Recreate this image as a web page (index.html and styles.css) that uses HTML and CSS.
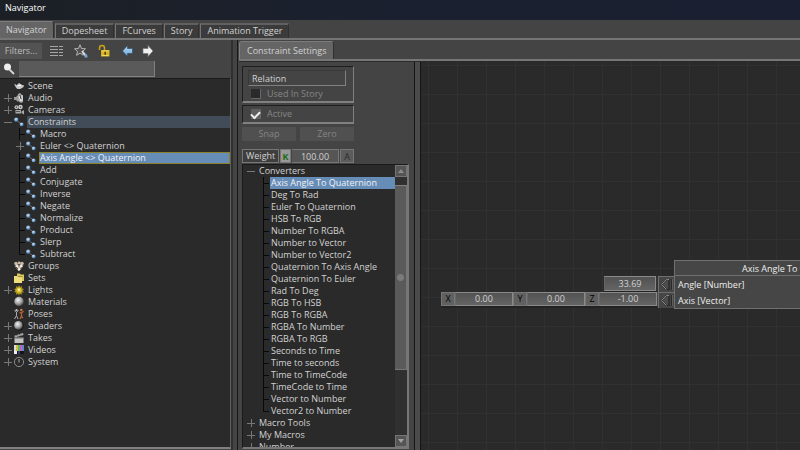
FILE: index.html
```html
<!DOCTYPE html>
<html lang="en">
<head>
<meta charset="utf-8">
<title>Navigator</title>
<link rel="stylesheet" href="styles.css">
</head>
<body>
<svg class="defs" aria-hidden="true">
  <defs>
    <radialGradient id="gBlue" cx=".4" cy=".35" r=".7"><stop offset="0" stop-color="#cfe6fa"/><stop offset=".6" stop-color="#6f9cc8"/><stop offset="1" stop-color="#2f4c6c"/></radialGradient>
    <radialGradient id="gGray" cx=".4" cy=".35" r=".7"><stop offset="0" stop-color="#f4f4f4"/><stop offset=".6" stop-color="#9a9a9a"/><stop offset="1" stop-color="#3c3c3c"/></radialGradient>
    <linearGradient id="gArrow" x1="0" y1="0" x2="0" y2="1"><stop offset="0" stop-color="#b9dcf8"/><stop offset="1" stop-color="#6ea5d6"/></linearGradient>
  </defs>
  <symbol id="link" viewBox="0 0 10 12"><path d="M2 4l6 4.500" stroke="#6b6b6b" fill="none"/><circle cx="2.300" cy="3.700" r="2.200" fill="url(#gBlue)"/><circle cx="7.700" cy="8.400" r="2" fill="url(#gBlue)"/></symbol>
  <symbol id="scene" viewBox="0 0 10 12"><path d="M.2 4.500C1.500 4 2 5 2.500 5.500c.2-1 1-1.500 2-1.600V3h1.200v.8c1 .1 2 .6 2.300 1.400C9 4.500 10 5 9.800 6.300 9.500 7.500 8.500 7.800 7.800 8c-.6 1.300-4.200 1.500-5.200.2C1.500 7.500 1.400 5.500.2 4.500z" fill="#c9c9c9"/><path d="M3.500 5.500h3.500" stroke="#fff"/></symbol>
  <symbol id="audio" viewBox="0 0 10 12"><path d="M0 5h2l2-2v7L2 8H0z" fill="#999"/><path d="M4 2l2-1 3 3v6l-2 1-3-2z" fill="#aaa"/><path d="M5 4l2 5M8 3v6" stroke="#eee" fill="none"/><path d="M6 3l1 4" stroke="#444"/></symbol>
  <symbol id="camera" viewBox="0 0 10 12"><circle cx="2.500" cy="3.300" r="2" fill="#bbb"/><circle cx="6.500" cy="3" r="2.200" fill="#ccc"/><circle cx="2.500" cy="3.300" r=".7" fill="#444"/><circle cx="6.500" cy="3" r=".8" fill="#444"/><path d="M1.500 6h5.500v3.500H1.500zM7.500 7.500L10 6v4.500L7.500 9z" fill="#a9a9a9"/><path d="M2 7.500h4" stroke="#555"/></symbol>
  <symbol id="groups" viewBox="0 0 10 12"><g fill="#c8b8a4"><circle cx="2" cy="3.500" r="1.800"/><circle cx="5.200" cy="3" r="1.400"/><circle cx="8" cy="3.500" r="1.800"/><path d="M.5 5.500h9L5.500 11h-1z"/></g><g fill="#f3eadf"><circle cx="3.300" cy="6" r="1.400"/><circle cx="7" cy="6" r="1.400"/><circle cx="5" cy="9" r="1.300"/></g><path d="M5 4.500v2M2 7l2 2M8.500 7l-2 2" stroke="#5e4938" fill="none"/></symbol>
  <symbol id="sets" viewBox="0 0 10 12"><path d="M3 1.500h3l.7 1H10V9H3z" fill="#d8c65e"/><path d="M0 4h3l.8 1H8v6H0z" fill="#f0dc7c"/><path d="M3.800 4.600H8.500" stroke="#9b8b35"/></symbol>
  <symbol id="light" viewBox="0 0 10 12"><path d="M5 1l1 2 2.200-1-.5 2.300 2.300.7-1.500 1.500L10 8.300l-2.300.2.300 2.200-2.100-1L5 11.500 4 9.700l-2 1 .2-2.200L0 8l1.400-1.500L0 5l2.300-.7L1.800 2 4 3z" fill="#a8921d"/><circle cx="5" cy="6.200" r="2.600" fill="#d9be2d"/><circle cx="5" cy="5.800" r="1.200" fill="#fff7ae"/></symbol>
  <symbol id="ball" viewBox="0 0 10 12"><circle cx="5" cy="5.500" r="4.700" fill="url(#gGray)"/></symbol>
  <symbol id="shader" viewBox="0 0 10 12"><circle cx="5" cy="5.800" r="4.800" fill="#171717"/><circle cx="4.400" cy="5.400" r="4.300" fill="url(#gGray)"/></symbol>
  <symbol id="poses" viewBox="0 0 10 12"><path d="M.5 2l2 2.500L4.500 2M2.500 4v3.500L.5 11M2.500 7.500L4 11" stroke="#aaa" fill="none"/><circle cx="2.500" cy="2" r="1" fill="#ccc"/><path d="M9.500 3L7.500 5l-2-.5M7.500 5v3L6 11M7 8l2 2" stroke="#b75f35" fill="none" stroke-width="1.300"/><circle cx="7.300" cy="2" r="1.200" fill="#d17c4a"/></symbol>
  <symbol id="takes" viewBox="0 0 10 12"><path d="M.5 5.500h9V11h-9z" fill="#c2c2c2"/><path d="M.3 3.700L9 1l.5 2L1 5.500z" fill="#aaa"/><path d="M2.500 3l1 1.500M5.300 2.200l1 1.500M1 6h8" stroke="#555" fill="none" stroke-width=".8"/></symbol>
  <symbol id="videos" viewBox="0 0 10 12"><path d="M0 1h10v9H0z" fill="#151515"/><path d="M0 1h2v6H0z" fill="#ddd"/><path d="M2 1h2v6H2z" fill="#c9c04a"/><path d="M4 1h2v6H4z" fill="#64b25d"/><path d="M6 1h2v6H6z" fill="#c45fc7"/><path d="M8 1h2v6H8z" fill="#5c8bd0"/><path d="M0 7h3v3H0z" fill="#eee"/><path d="M4 7h2v3H4z" fill="#3b3780"/></symbol>
  <symbol id="system" viewBox="0 0 10 12"><circle cx="5" cy="6" r="4.600" fill="none" stroke="#8a8a8a"/><path d="M5 3v3.500" stroke="#aaa"/></symbol>
  <symbol id="pin" viewBox="0 0 15 15"><path d="M12.500 2v11" stroke="#2a2a2a" stroke-width="1"/><path d="M13.500 2v11" stroke="#5e5e5e" stroke-width="1"/><path d="M10 2.500v10H7.500l-5-5 5-5z" fill="#4c4c4c" stroke="#242424" stroke-width="1.200"/><path d="M7.500 12.500l-5-5 5-5H10" stroke="#8a8a8a" fill="none"/></symbol>
</svg>

<header class="titlebar"><h1>Navigator</h1></header>

<nav class="tabs">
  <button class="tab active">Navigator</button>
  <button class="tab">Dopesheet</button>
  <button class="tab">FCurves</button>
  <button class="tab">Story</button>
  <button class="tab">Animation Trigger</button>
</nav>

<main class="workspace">
  <section class="navigator">
    <div class="toolbar">
      <button class="filters">Filters...</button>
      <button class="tool" aria-label="List view"><svg width="14" height="14" viewBox="0 0 14 14"><path d="M0 2.500h8M0 5.500h8M0 8.500h8M0 11.500h8M9 2.500h4M9 5.500h4M9 8.500h4M9 11.500h4" stroke="#a6a6a6"/></svg></button>
      <button class="tool" aria-label="Favourites"><svg width="14" height="14" viewBox="0 0 14 14"><path d="M6 .8l1.500 3.700 4 .3-3 2.600.9 3.900L6 9.200l-3.400 2.100.9-3.900-3-2.600 4-.3z" fill="#505050" stroke="#b5b5b5"/><path d="M8 7l4 5" stroke="#ddd" stroke-width="2"/><path d="M11 9.500c2 .3 2.500 1.500 2.500 4h-3z" fill="#78a9d5"/></svg></button>
      <button class="tool" aria-label="Unlock"><svg width="14" height="14" viewBox="0 0 14 14"><path d="M1.500 6V4c0-3.400 5-3.400 5 0v3" fill="none" stroke="#c9a31b" stroke-width="1.500"/><path d="M3 6h8.500v6.500H3z" fill="#d6b323"/><path d="M4 7h6.500M4 11.500h6.500" stroke="#f3da67"/><path d="M7.200 7.800v3" stroke="#4a3b05" stroke-width="1.500"/></svg></button>
      <button class="tool wide" aria-label="Back"><svg width="12" height="14" viewBox="0 0 12 14"><path d="M.5 7L5.500 1.500v3h5v5h-5v3z" fill="url(#gArrow)" stroke="#31506c" stroke-width=".7"/></svg></button>
      <button class="tool" aria-label="Forward"><svg width="12" height="14" viewBox="0 0 12 14"><path d="M11 7L6 1.500v3H1v5h5v3z" fill="#f0f0f0" stroke="#777" stroke-width=".7"/></svg></button>
    </div>
    <div class="search">
      <label for="find"><svg width="12" height="12" viewBox="0 0 12 12" role="img" aria-label="Search"><circle cx="4.500" cy="4" r="3.500" fill="#eee"/><path d="M6.500 6.500l4.500 4.500" stroke="#d6d6d6" stroke-width="1.800"/></svg></label>
      <input id="find" type="text">
    </div>
    <ul class="tree">
      <li class="row"><i class="toggle"></i><svg class="icon"><use href="#scene"/></svg><span>Scene</span></li>
      <li class="row"><i class="toggle plus"></i><svg class="icon"><use href="#audio"/></svg><span>Audio</span></li>
      <li class="row"><i class="toggle plus"></i><svg class="icon"><use href="#camera"/></svg><span>Cameras</span></li>
      <li class="row parent"><i class="toggle minus"></i><svg class="icon"><use href="#link"/></svg><span>Constraints</span></li>
      <li><ul class="children">
        <li class="row"><i class="branch"></i><svg class="icon"><use href="#link"/></svg><span>Macro</span></li>
        <li class="row"><i class="branch more"></i><svg class="icon"><use href="#link"/></svg><span>Euler &lt;&gt; Quaternion</span></li>
        <li class="row selected"><i class="branch"></i><svg class="icon"><use href="#link"/></svg><span>Axis Angle &lt;&gt; Quaternion</span></li>
        <li class="row"><i class="branch"></i><svg class="icon"><use href="#link"/></svg><span>Add</span></li>
        <li class="row"><i class="branch"></i><svg class="icon"><use href="#link"/></svg><span>Conjugate</span></li>
        <li class="row"><i class="branch"></i><svg class="icon"><use href="#link"/></svg><span>Inverse</span></li>
        <li class="row"><i class="branch"></i><svg class="icon"><use href="#link"/></svg><span>Negate</span></li>
        <li class="row"><i class="branch"></i><svg class="icon"><use href="#link"/></svg><span>Normalize</span></li>
        <li class="row"><i class="branch"></i><svg class="icon"><use href="#link"/></svg><span>Product</span></li>
        <li class="row"><i class="branch"></i><svg class="icon"><use href="#link"/></svg><span>Slerp</span></li>
        <li class="row"><i class="branch last"></i><svg class="icon"><use href="#link"/></svg><span>Subtract</span></li>
      </ul></li>
      <li class="row"><i class="toggle"></i><svg class="icon"><use href="#groups"/></svg><span>Groups</span></li>
      <li class="row"><i class="toggle"></i><svg class="icon"><use href="#sets"/></svg><span>Sets</span></li>
      <li class="row"><i class="toggle plus"></i><svg class="icon"><use href="#light"/></svg><span>Lights</span></li>
      <li class="row"><i class="toggle"></i><svg class="icon"><use href="#ball"/></svg><span>Materials</span></li>
      <li class="row"><i class="toggle"></i><svg class="icon"><use href="#poses"/></svg><span>Poses</span></li>
      <li class="row"><i class="toggle plus"></i><svg class="icon"><use href="#shader"/></svg><span>Shaders</span></li>
      <li class="row"><i class="toggle plus"></i><svg class="icon"><use href="#takes"/></svg><span>Takes</span></li>
      <li class="row"><i class="toggle plus"></i><svg class="icon"><use href="#videos"/></svg><span>Videos</span></li>
      <li class="row"><i class="toggle plus"></i><svg class="icon"><use href="#system"/></svg><span>System</span></li>
    </ul>
  </section>

  <div class="splitter"></div>

  <section class="editor">
    <nav class="tabs inner"><button class="tab active">Constraint Settings</button></nav>
    <div class="panes">
      <div class="settings">
        <div class="group relation">
          <input class="name" type="text" value="Relation" aria-label="Constraint name">
          <label class="check"><input type="checkbox">Used In Story</label>
        </div>
        <div class="group"><label class="check"><input type="checkbox" checked>Active</label></div>
        <div class="actions"><button>Snap</button><button>Zero</button></div>
        <div class="weight">
          <label for="weight">Weight</label><button class="key">K</button>
          <input id="weight" type="text" value="100.00"><button class="anim">A</button>
        </div>
        <div class="library">
          <ul class="ops">
            <li class="row"><i class="toggle minus"></i><span>Converters</span></li>
            <li><ul class="children">
              <li class="row selected"><i class="branch"></i><span>Axis Angle To Quaternion</span></li>
              <li class="row"><i class="branch"></i><span>Deg To Rad</span></li>
              <li class="row"><i class="branch"></i><span>Euler To Quaternion</span></li>
              <li class="row"><i class="branch"></i><span>HSB To RGB</span></li>
              <li class="row"><i class="branch"></i><span>Number To RGBA</span></li>
              <li class="row"><i class="branch"></i><span>Number to Vector</span></li>
              <li class="row"><i class="branch"></i><span>Number to Vector2</span></li>
              <li class="row"><i class="branch"></i><span>Quaternion To Axis Angle</span></li>
              <li class="row"><i class="branch"></i><span>Quaternion To Euler</span></li>
              <li class="row"><i class="branch"></i><span>Rad To Deg</span></li>
              <li class="row"><i class="branch"></i><span>RGB To HSB</span></li>
              <li class="row"><i class="branch"></i><span>RGB To RGBA</span></li>
              <li class="row"><i class="branch"></i><span>RGBA To Number</span></li>
              <li class="row"><i class="branch"></i><span>RGBA To RGB</span></li>
              <li class="row"><i class="branch"></i><span>Seconds to Time</span></li>
              <li class="row"><i class="branch"></i><span>Time to seconds</span></li>
              <li class="row"><i class="branch"></i><span>Time to TimeCode</span></li>
              <li class="row"><i class="branch"></i><span>TimeCode to Time</span></li>
              <li class="row"><i class="branch"></i><span>Vector to Number</span></li>
              <li class="row"><i class="branch last"></i><span>Vector2 to Number</span></li>
            </ul></li>
            <li class="row"><i class="toggle plus"></i><span>Macro Tools</span></li>
            <li class="row"><i class="toggle plus"></i><span>My Macros</span></li>
            <li class="row"><i class="toggle plus"></i><span>Number</span></li>
          </ul>
          <div class="scrollbar">
            <button aria-label="Scroll up"><svg width="6" height="4" viewBox="0 0 6 4"><path d="M3 0l3 4H0z" fill="#8c8c8c"/></svg></button>
            <div class="track"><div class="thumb"></div></div>
            <button aria-label="Scroll down"><svg width="6" height="4" viewBox="0 0 6 4"><path d="M3 4l3-4H0z" fill="#a0a0a0"/></svg></button>
          </div>
        </div>
      </div>
      <div class="splitter narrow"></div>
      <div class="canvas">
        <div class="value number"><input type="text" value="33.69" aria-label="Angle"></div>
        <div class="value vector">
          <label for="vx">X</label><input id="vx" type="text" value="0.00">
          <label for="vy">Y</label><input id="vy" type="text" value="0.00">
          <label for="vz">Z</label><input id="vz" type="text" value="-1.00">
        </div>
        <div class="pins">
          <div class="pin"><svg><use href="#pin"/></svg></div>
          <div class="pin"><svg><use href="#pin"/></svg></div>
        </div>
        <article class="node">
          <h2>Axis Angle To Quaternion</h2>
          <p>Angle [Number]</p>
          <p>Axis [Vector]</p>
        </article>
      </div>
    </div>
  </section>
</main>
</body>
</html>
```
FILE: styles.css
```css
* { box-sizing: border-box; }

body {
  margin: 0;
  height: 100vh;
  display: flex;
  flex-direction: column;
  overflow: hidden;
  background: #444;
  color: #d2d2d2;
  font: 9px/12px "Open Sans", "Noto Sans", sans-serif;
}

button, input {
  font: inherit;
  color: inherit;
  margin: 0;
  padding: 0;
  border: 0;
  border-radius: 0;
  background: none;
}

input { min-width: 0; outline: 0; }
ul { margin: 0; padding: 0; list-style: none; }
svg { display: block; }
.defs { position: absolute; width: 0; height: 0; }

.titlebar {
  flex: none;
  height: 20px;
  padding: 2px 5px;
  background: linear-gradient(90deg, #1c2025, #1b2030 50%, #1a2031);
  color: #fff;
}
.titlebar h1 { margin: 0; font: inherit; }

/* Tabs */
.tabs {
  flex: none;
  display: flex;
  align-items: flex-end;
  gap: 1px;
  height: 20px;
  padding-top: 1px;
  border-bottom: 2px solid #757575;
}
.tab {
  height: 15px;
  padding: 0 6px 1px;
  background: #3b3b3b;
  border-top: 2px solid #606060;
  border-left: 1px solid #757575;
  border-right: 1px solid #303030;
}
.tab.active {
  height: 17px;
  padding: 0 6px;
  background: #656565;
  border-top: 1px solid #7c7c7c;
  border-left: 0;
  border-radius: 0 3px 0 0;
}

.workspace { flex: 1; min-height: 0; display: flex; }

/* Navigator */
.navigator {
  flex: 0 0 231px;
  display: flex;
  flex-direction: column;
  padding-top: 3px;
}
.toolbar { display: flex; align-items: center; height: 16px; gap: 10px; }
.filters {
  width: 42px;
  height: 16px;
  margin-right: -2px;
  background: #535353;
  color: #bcbcbc;
}
.tool:last-child { margin-left: -2px; }
.search { display: flex; align-items: center; height: 18px; padding: 2px 3px 0; gap: 4px; }
.search input {
  width: 136px;
  height: 16px;
  background: #5a5a5a;
  border-right: 1px solid #808080;
  border-bottom: 1px solid #808080;
}
.tree {
  flex: 1;
  margin: 1px 0 1px;
  padding-top: 1px;
  overflow: hidden;
  background: #2a2a2a;
  border-top: 1px solid #1b1b1b;
  border-right: 1px solid #606060;
  border-bottom: 2px solid #808080;
}

/* Tree rows */
.row { display: flex; align-items: center; height: 12px; white-space: nowrap; }
.row span { flex: 1; height: 12px; line-height: 12px; padding-left: 1px; }
.icon { flex: none; width: 10px; height: 12px; margin-right: 3px; overflow: visible; }
.toggle { flex: none; width: 10px; height: 12px; margin-left: 4px; }
.plus {
  background:
    linear-gradient(#777, #777) 0 6px / 8px 1px no-repeat,
    linear-gradient(#777, #777) 4px 2px / 1px 8px no-repeat;
}
.minus { background: linear-gradient(#777, #777) 0 6px / 8px 1px no-repeat; }
.parent span { background: #414c58; }
.branch {
  flex: none;
  width: 7px;
  height: 12px;
  margin-left: 19px;
  background:
    linear-gradient(#090909, #090909) 0 0 / 1px 12px no-repeat,
    linear-gradient(#090909, #090909) 0 6px / 6px 1px no-repeat;
}
.branch.last {
  background:
    linear-gradient(#090909, #090909) 0 0 / 1px 6px no-repeat,
    linear-gradient(#090909, #090909) 0 6px / 6px 1px no-repeat;
}
.branch.more {
  width: 10px;
  margin-left: 16px;
  background:
    linear-gradient(#777, #777) 0 6px / 8px 1px no-repeat,
    linear-gradient(#777, #777) 4px 2px / 1px 8px no-repeat;
}
.selected span { background: #668cb8; color: #f2f2f2; }
.tree .selected span { line-height: 10px; padding-left: 0; border: 1px solid #8b8230; }

.splitter {
  flex: none;
  width: 8px;
  background: linear-gradient(90deg, #303030 0 2px, #444 2px 6px, #181818 6px 7px, #444 7px);
}
.splitter.narrow {
  width: 7px;
  background: linear-gradient(90deg, #151515 0 1px, #4b4b4b 1px 6px, #151515 6px);
}

/* Editor */
.editor { flex: 1; min-width: 0; display: flex; flex-direction: column; }
.tabs.inner { height: 21px; border-bottom-color: #777; }
.inner .tab.active {
  height: 18px;
  padding: 0 6px 0 7px;
  border-left: 1px solid #808080;
  border-radius: 3px 3px 0 0;
}
.panes { flex: 1; min-height: 0; display: flex; border-top: 1px solid #2a2a2a; }
.settings {
  flex: 0 0 175px;
  display: flex;
  flex-direction: column;
  gap: 2px;
  padding: 4px 5px 1px 3px;
}
.group {
  width: 112px;
  padding: 1px 8px;
  border: 1px solid #1e1e1e;
  border-right-color: #808080;
  border-bottom: 2px solid #808080;
}
.relation { padding: 3px 5px 0; }
.name {
  width: 98px;
  height: 16px;
  padding-left: 3px;
  border: 1px solid #383838;
  border-right: 1px solid #808080;
  border-bottom: 1px solid #808080;
}
.check { display: flex; align-items: center; gap: 6px; height: 14px; color: #868686; }
.relation .check { padding-left: 3px; height: 15px; }
.check input {
  appearance: none;
  display: grid;
  place-items: center;
  width: 10px;
  height: 10px;
  background: #2a2a2a;
  border-right: 1px solid #666;
  border-bottom: 1px solid #666;
}
.check input:checked { background: #606060; }
.check input:checked::before {
  content: "";
  width: 7px;
  height: 4px;
  border: solid #f0f0f0;
  border-width: 0 0 2px 2px;
  transform: rotate(-45deg);
}
.actions { display: flex; gap: 4px; width: 112px; margin-top: 1px; }
.actions button { flex: 1; height: 14px; background: #505050; color: #858585; }
.weight {
  display: flex;
  gap: 1px;
  width: 112px;
  height: 14px;
  margin: 6px 0 -1px;
}
.weight > * { border: 1px solid #777; line-height: 11px; }
.weight > input { width: 47px; text-align: center; background: #555; border-left: 0; }
.weight label { width: 37px; padding-left: 3px; background: #3e3e3e; }
.weight .key { width: 11px; background: #999; color: #1d6b10; font-weight: 700; }
.weight .anim { flex: 1; background: #5c5c5c; color: #2a2a2a; }
.library {
  flex: 1;
  min-height: 0;
  width: 167px;
  display: flex;
  background: #2a2a2a;
  border: 1px solid #1a1a1a;
  border-right: 2px solid #777;
  border-bottom: 2px solid #777;
}
.ops { flex: 1; overflow: hidden; }
.ops .toggle { width: 11px; }
.ops .branch { margin-left: 20px; width: 7px; }
.scrollbar { flex: 0 0 12px; display: flex; flex-direction: column; background: #303030; }
.scrollbar button {
  flex: none;
  display: grid;
  place-items: center;
  height: 12px;
  background: #555;
  border: 1px solid #757575;
}
.track { flex: 1; padding-top: 8px; }
.thumb {
  height: 74%;
  background: radial-gradient(circle, #7b7b7b 0 3px, #5a5a5a 4px);
  border-top: 1px solid #808080;
  border-right: 1px solid #757575;
  border-bottom: 1px solid #757575;
}

/* Relation canvas */
.canvas {
  flex: 1;
  min-width: 0;
  position: relative;
  overflow: hidden;
  background:
    linear-gradient(90deg, #313131 1px, transparent 1px) 7px 0 / 29px 29px,
    linear-gradient(#313131 1px, transparent 1px) 0 3px / 29px 29px,
    #2a2a2a;
}
.value { position: absolute; display: flex; height: 16px; }
.value input {
  flex: 1;
  text-align: center;
  background: linear-gradient(#525252, #646464);
  border: 1px solid #8a8a8a;
  border-left-color: #666;
}
.value label {
  flex: none;
  width: 14px;
  text-align: center;
  color: #000;
  background: #606060;
  border: 1px solid #777;
}
.number { left: 183px; top: 214px; width: 54px; border-right: 2px solid #343434; border-bottom: 1px solid #222; }
.vector { left: 20px; top: 230px; width: 217px; border-bottom: 2px solid #222; border-right: 1px solid #444; }
.pins { position: absolute; left: 237px; top: 214px; width: 16px; }
.pin { height: 16px; background: #464646; border-top: 1px solid #707070; border-left: 1px solid #707070; }
.pin svg { width: 15px; height: 15px; }
.node {
  position: absolute;
  left: 253px;
  top: 198px;
  width: 242px;
  background: #464646;
  border: 1px solid #707070;
  color: #eee;
}
.node h2, .node p { margin: 0; font: inherit; height: 16px; line-height: 18px; }
.node h2 { text-align: center; height: 15px; line-height: 16px; border-bottom: 1px solid #707070; }
.node p { padding-left: 3px; }
```
